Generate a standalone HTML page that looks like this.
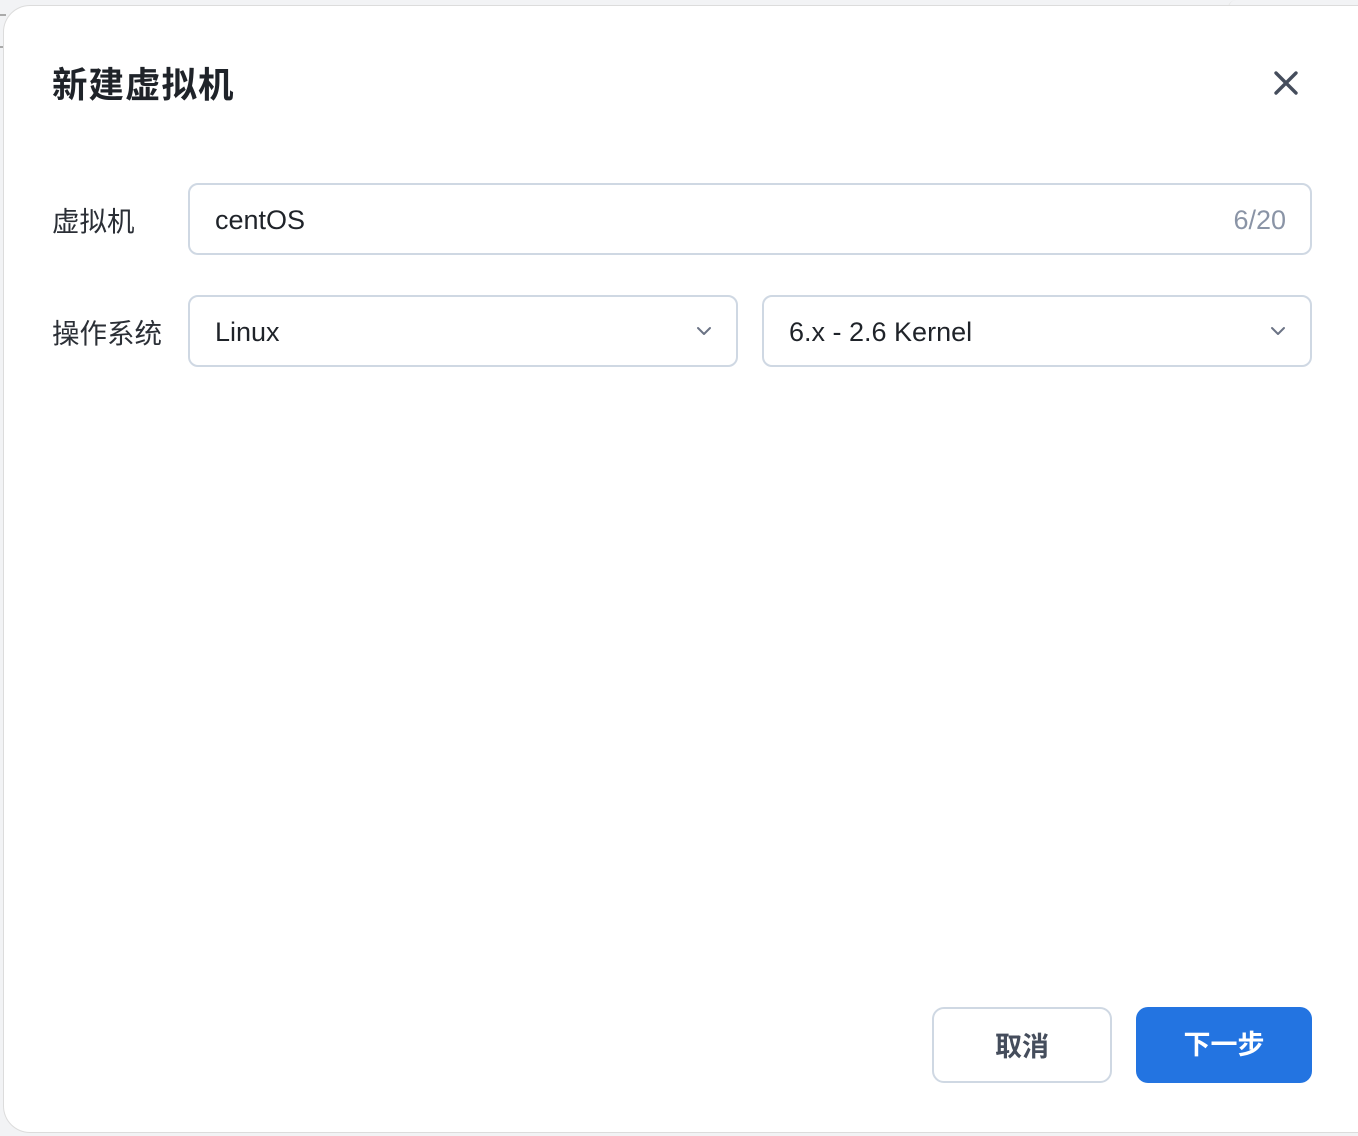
<!DOCTYPE html>
<html><head><meta charset="utf-8"><style>
html,body{margin:0;padding:0;width:1358px;height:1136px;overflow:hidden;background:#f2f3f5;font-family:"Liberation Sans","Noto Sans CJK SC",sans-serif;}
.dlg{position:absolute;left:4px;top:6px;width:1380px;height:1126px;background:#fff;border-radius:26px;box-shadow:0 0 0 1px #dcdcdc;}
.title{position:absolute;left:52px;top:57px;font-size:35.5px;font-weight:bold;color:#1f2329;letter-spacing:1px;}
.close{position:absolute;left:1272px;top:69px;}
.lbl{position:absolute;left:52px;font-size:27.5px;color:#2b2f36;}
.box{position:absolute;border:2px solid #cfd8e3;border-radius:10px;box-sizing:border-box;background:#fff;font-size:27px;color:#1f2329;}
.box span{position:absolute;left:25px;top:20px;}
.chev{position:absolute;right:24px;top:28px;}
.btn{position:absolute;top:1007px;height:76px;border-radius:12px;box-sizing:border-box;font-size:27px;font-weight:bold;text-align:center;line-height:77px;}
</style></head><body>
<div style="position:absolute;left:0;top:14px;width:6px;height:30px;border-top:2px solid #aaa;border-bottom:2px solid #aaa;"></div>
<div style="position:absolute;left:1228px;top:0;width:60px;height:8px;border-left:1px solid #e6e6e6;border-radius:30px 0 0 0;"></div>
<div class="dlg"></div>
<div class="title">新建虚拟机</div>
<svg class="close" width="28" height="28" viewBox="0 0 28 28"><path d="M4 4L24 24M24 4L4 24" stroke="#454d5c" stroke-width="3.4" stroke-linecap="round"/></svg>
<div class="lbl" style="top:199px">虚拟机</div>
<div class="lbl" style="top:311px">操作系统</div>
<div class="box" style="left:188px;top:183px;width:1124px;height:72px;"><span>centOS</span><span style="left:auto;right:24px;color:#8a94a6;">6/20</span></div>
<div class="box" style="left:188px;top:295px;width:550px;height:72px;"><span>Linux</span><svg class="chev" width="16" height="12" viewBox="0 0 16 12"><path d="M2 3L8 9L14 3" stroke="#6b7385" stroke-width="2" fill="none" stroke-linecap="round" stroke-linejoin="round"/></svg></div>
<div class="box" style="left:762px;top:295px;width:550px;height:72px;"><span>6.x - 2.6 Kernel</span><svg class="chev" width="16" height="12" viewBox="0 0 16 12"><path d="M2 3L8 9L14 3" stroke="#6b7385" stroke-width="2" fill="none" stroke-linecap="round" stroke-linejoin="round"/></svg></div>
<div class="btn" style="left:932px;width:180px;border:2px solid #cfd8e3;color:#454d5c;background:#fff;">取消</div>
<div class="btn" style="left:1136px;width:176px;background:#2374e1;color:#fff;">下一步</div>
</body></html>
